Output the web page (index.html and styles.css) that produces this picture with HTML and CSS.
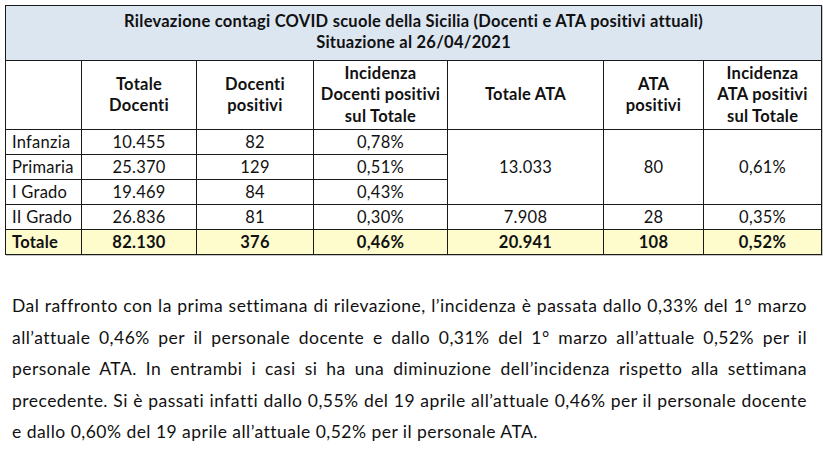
FILE: index.html
```html
<!DOCTYPE html>
<html lang="it">
<head>
<meta charset="utf-8">
<title>Rilevazione contagi COVID scuole della Sicilia</title>
<link rel="stylesheet" href="styles.css">
</head>
<body>
<table class="report">
  <colgroup>
    <col class="c-label">
    <col class="c-tot-doc">
    <col class="c-doc-pos">
    <col class="c-inc-doc">
    <col class="c-tot-ata">
    <col class="c-ata-pos">
    <col class="c-inc-ata">
  </colgroup>
  <thead>
    <tr class="title-row">
      <th colspan="7">Rilevazione contagi COVID scuole della Sicilia (Docenti e ATA positivi attuali)<br>Situazione al 26/04/2021</th>
    </tr>
    <tr class="head-row">
      <th></th>
      <th>Totale<br>Docenti</th>
      <th>Docenti<br>positivi</th>
      <th>Incidenza<br>Docenti positivi<br>sul Totale</th>
      <th>Totale ATA</th>
      <th>ATA<br>positivi</th>
      <th>Incidenza<br>ATA positivi<br>sul Totale</th>
    </tr>
  </thead>
  <tbody>
    <tr>
      <td class="label">Infanzia</td>
      <td>10.455</td>
      <td>82</td>
      <td>0,78%</td>
      <td rowspan="3">13.033</td>
      <td rowspan="3">80</td>
      <td rowspan="3">0,61%</td>
    </tr>
    <tr>
      <td class="label">Primaria</td>
      <td>25.370</td>
      <td>129</td>
      <td>0,51%</td>
    </tr>
    <tr>
      <td class="label">I Grado</td>
      <td>19.469</td>
      <td>84</td>
      <td>0,43%</td>
    </tr>
    <tr>
      <td class="label">II Grado</td>
      <td>26.836</td>
      <td>81</td>
      <td>0,30%</td>
      <td>7.908</td>
      <td>28</td>
      <td>0,35%</td>
    </tr>
    <tr class="total-row">
      <td class="label">Totale</td>
      <td>82.130</td>
      <td>376</td>
      <td>0,46%</td>
      <td>20.941</td>
      <td>108</td>
      <td>0,52%</td>
    </tr>
  </tbody>
</table>

<p class="note">Dal raffronto con la prima settimana di rilevazione, l’incidenza è passata dallo 0,33% del 1° marzo all’attuale 0,46% per il personale docente e dallo 0,31% del 1° marzo all’attuale 0,52% per il personale ATA. In entrambi i casi si ha una diminuzione dell’incidenza rispetto alla settimana precedente. Si è passati infatti dallo 0,55% del 19 aprile all’attuale 0,46% per il personale docente e dallo 0,60% del 19 aprile all’attuale 0,52% per il personale ATA.</p>
</body>
</html>
```
FILE: styles.css
```css
html, body {
  margin: 0;
  padding: 0;
  background: #ffffff;
}

body {
  padding: 5px 0 0 5px;
  font-family: Lato, "Open Sans", sans-serif;
  color: #111111;
  font-size: 16.5px;
  letter-spacing: 0.25px;
}

.report {
  border-collapse: collapse;
  table-layout: fixed;
  width: 816px;
  box-shadow: 1px 1px 0 #c8c8c8;
}

.c-label { width: 76px; }
.c-tot-doc { width: 115px; }
.c-doc-pos { width: 117px; }
.c-inc-doc { width: 134px; }
.c-tot-ata { width: 156px; }
.c-ata-pos { width: 100px; }
.c-inc-ata { width: 118px; }

.report th,
.report td {
  border: 1px solid #1a1a1a;
  padding: 0 3px;
  text-align: center;
  vertical-align: middle;
}

.title-row th {
  background: #dce6f1;
  height: 52px;
  line-height: 21px;
  font-weight: 700;
  padding-bottom: 2px;
}

.head-row th {
  height: 68px;
  line-height: 21.5px;
  font-weight: 700;
}

.report td {
  height: 24px;
  line-height: 20px;
  padding-top: 0;
  padding-bottom: 0;
}

.report td.label {
  text-align: left;
  padding-left: 6px;
  padding-right: 1px;
  white-space: nowrap;
}

.total-row td {
  background: #fefbcd;
  font-weight: 700;
}

.note {
  margin: 35px 0 0 7px;
  width: 795px;
  line-height: 31.5px;
  text-align: justify;
  font-size: 17.5px;
  letter-spacing: 0.47px;
}
```
